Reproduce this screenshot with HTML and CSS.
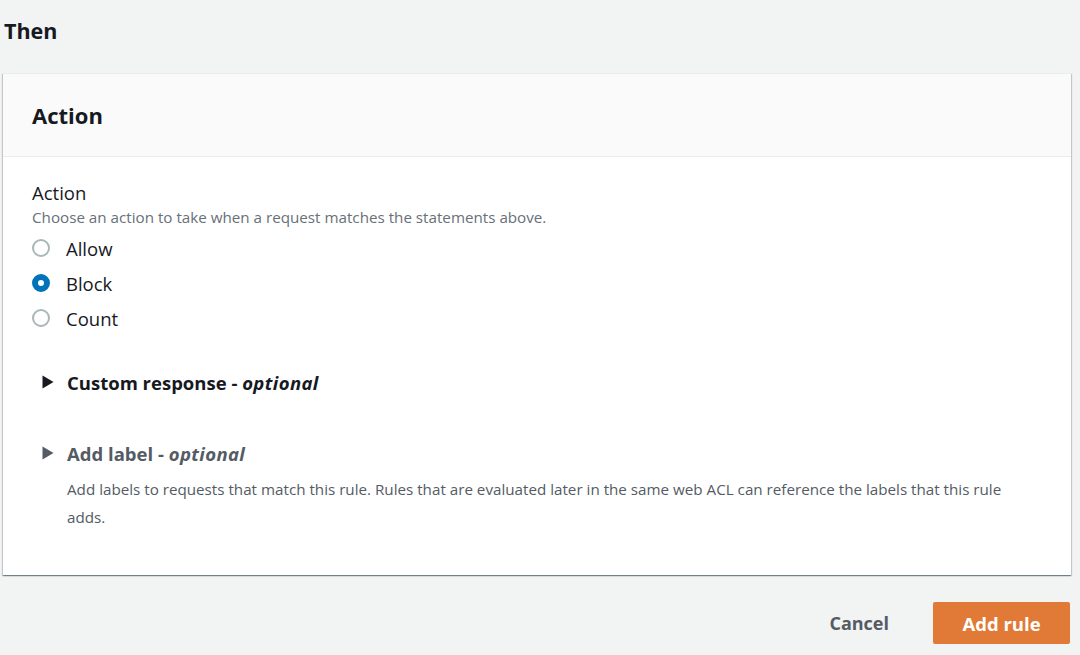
FILE: index.html
```html
<!DOCTYPE html>
<html>
<head>
<meta charset="utf-8">
<link rel="stylesheet" href="styles.css">
</head>
<body>
<div class="page">
  <h2 class="section-title">Then</h2>
  <div class="card">
    <div class="card-header"><h3>Action</h3></div>
    <div class="card-body">
      <div class="field-label">Action</div>
      <div class="field-desc">Choose an action to take when a request matches the statements above.</div>
      <div class="radios">
        <label class="radio"><span class="dot"></span><span>Allow</span></label>
        <label class="radio"><span class="dot checked"></span><span>Block</span></label>
        <label class="radio"><span class="dot"></span><span>Count</span></label>
      </div>
      <div class="expander">
        <svg class="caret" width="12" height="14" viewBox="0 0 12 14"><path d="M0.5 0.5 L11.5 7 L0.5 13.5 Z" fill="currentColor"/></svg>
        <span class="exp-title">Custom response - <em>optional</em></span>
      </div>
      <div class="expander muted">
        <svg class="caret" width="12" height="14" viewBox="0 0 12 14"><path d="M0.5 0.5 L11.5 7 L0.5 13.5 Z" fill="currentColor"/></svg>
        <span class="exp-title">Add label - <em>optional</em></span>
      </div>
      <p class="exp-desc">Add labels to requests that match this rule. Rules that are evaluated later in the same web ACL can reference the labels that this rule adds.</p>
    </div>
  </div>
  <div class="actions">
    <button class="btn-link">Cancel</button>
    <button class="btn-primary">Add rule</button>
  </div>
</div>
</body>
</html>
```
FILE: styles.css
```css
html, body {
  margin: 0;
  padding: 0;
  background: #f2f3f3;
  font-family: "Open Sans", "Noto Sans", sans-serif;
  color: #16191f;
}
.page {
  width: 1068px;
  padding: 0 0 0 3px;
}
.section-title {
  margin: 0;
  padding: 17px 0 0 1px;
  height: 56px;
  box-sizing: border-box;
  font-size: 21.5px;
  font-weight: 700;
  line-height: 28px;
}
.card {
  margin-top: 17px;
  background: #fff;
  box-shadow: 0 1px 1px 0 rgba(0,28,36,.35), 1px 1px 1px 0 rgba(0,28,36,.15), -1px 1px 1px 0 rgba(0,28,36,.15);
  border-top: 1px solid #eaeded;
}
.card-header {
  background: #fafafa;
  border-bottom: 1px solid #eaeded;
  height: 83px;
  box-sizing: border-box;
  display: flex;
  align-items: center;
  padding: 0 29px;
}
.card-header h3 {
  margin: 0;
  font-size: 22px;
  font-weight: 700;
  line-height: 30px;
}
.card-body {
  padding: 24px 29px 44px;
}
.field-label {
  font-size: 18.5px;
  line-height: 24px;
}
.field-desc {
  font-size: 15.2px;
  color: #687078;
  line-height: 24px;
}
.radios {
  display: flex;
  flex-direction: column;
  gap: 7px;
  margin-top: 5px;
}
.radio {
  display: flex;
  align-items: center;
  gap: 16px;
  font-size: 18.5px;
  height: 28px;
}
.dot {
  width: 18px;
  height: 18px;
  border-radius: 50%;
  border: 2px solid #aab7b8;
  box-sizing: border-box;
  margin-left: 0;
  flex: none;
}
.dot.checked {
  border: 6px solid #0073bb;
  background: #fff;
}
.expander {
  display: flex;
  align-items: center;
  gap: 13px;
  margin-top: 36px;
  padding-left: 10px;
  font-size: 18.5px;
  font-weight: 700;
  height: 28px;
}
.expander em { font-style: italic; letter-spacing: 0.4px; }
.expander.muted {
  color: #545b64;
  margin-top: 43px;
}
.caret { display: block; flex: none; }
.exp-desc {
  margin: 8px 0 0 35px;
  font-size: 15.2px;
  line-height: 28px;
  color: #545b64;
  max-width: 950px;
}
.actions {
  display: flex;
  justify-content: flex-end;
  align-items: center;
  gap: 44px;
  margin-top: 27px;
  padding-right: 1px;
}
.btn-link {
  background: none;
  border: none;
  font-family: inherit;
  font-size: 18px;
  font-weight: 700;
  color: #545b64;
  padding: 0;
}
.btn-primary {
  background: #e07a36;
  color: #fff;
  border: none;
  border-radius: 2px;
  font-family: inherit;
  font-size: 18.5px;
  font-weight: 700;
  width: 137px;
  height: 42px;
}
```
